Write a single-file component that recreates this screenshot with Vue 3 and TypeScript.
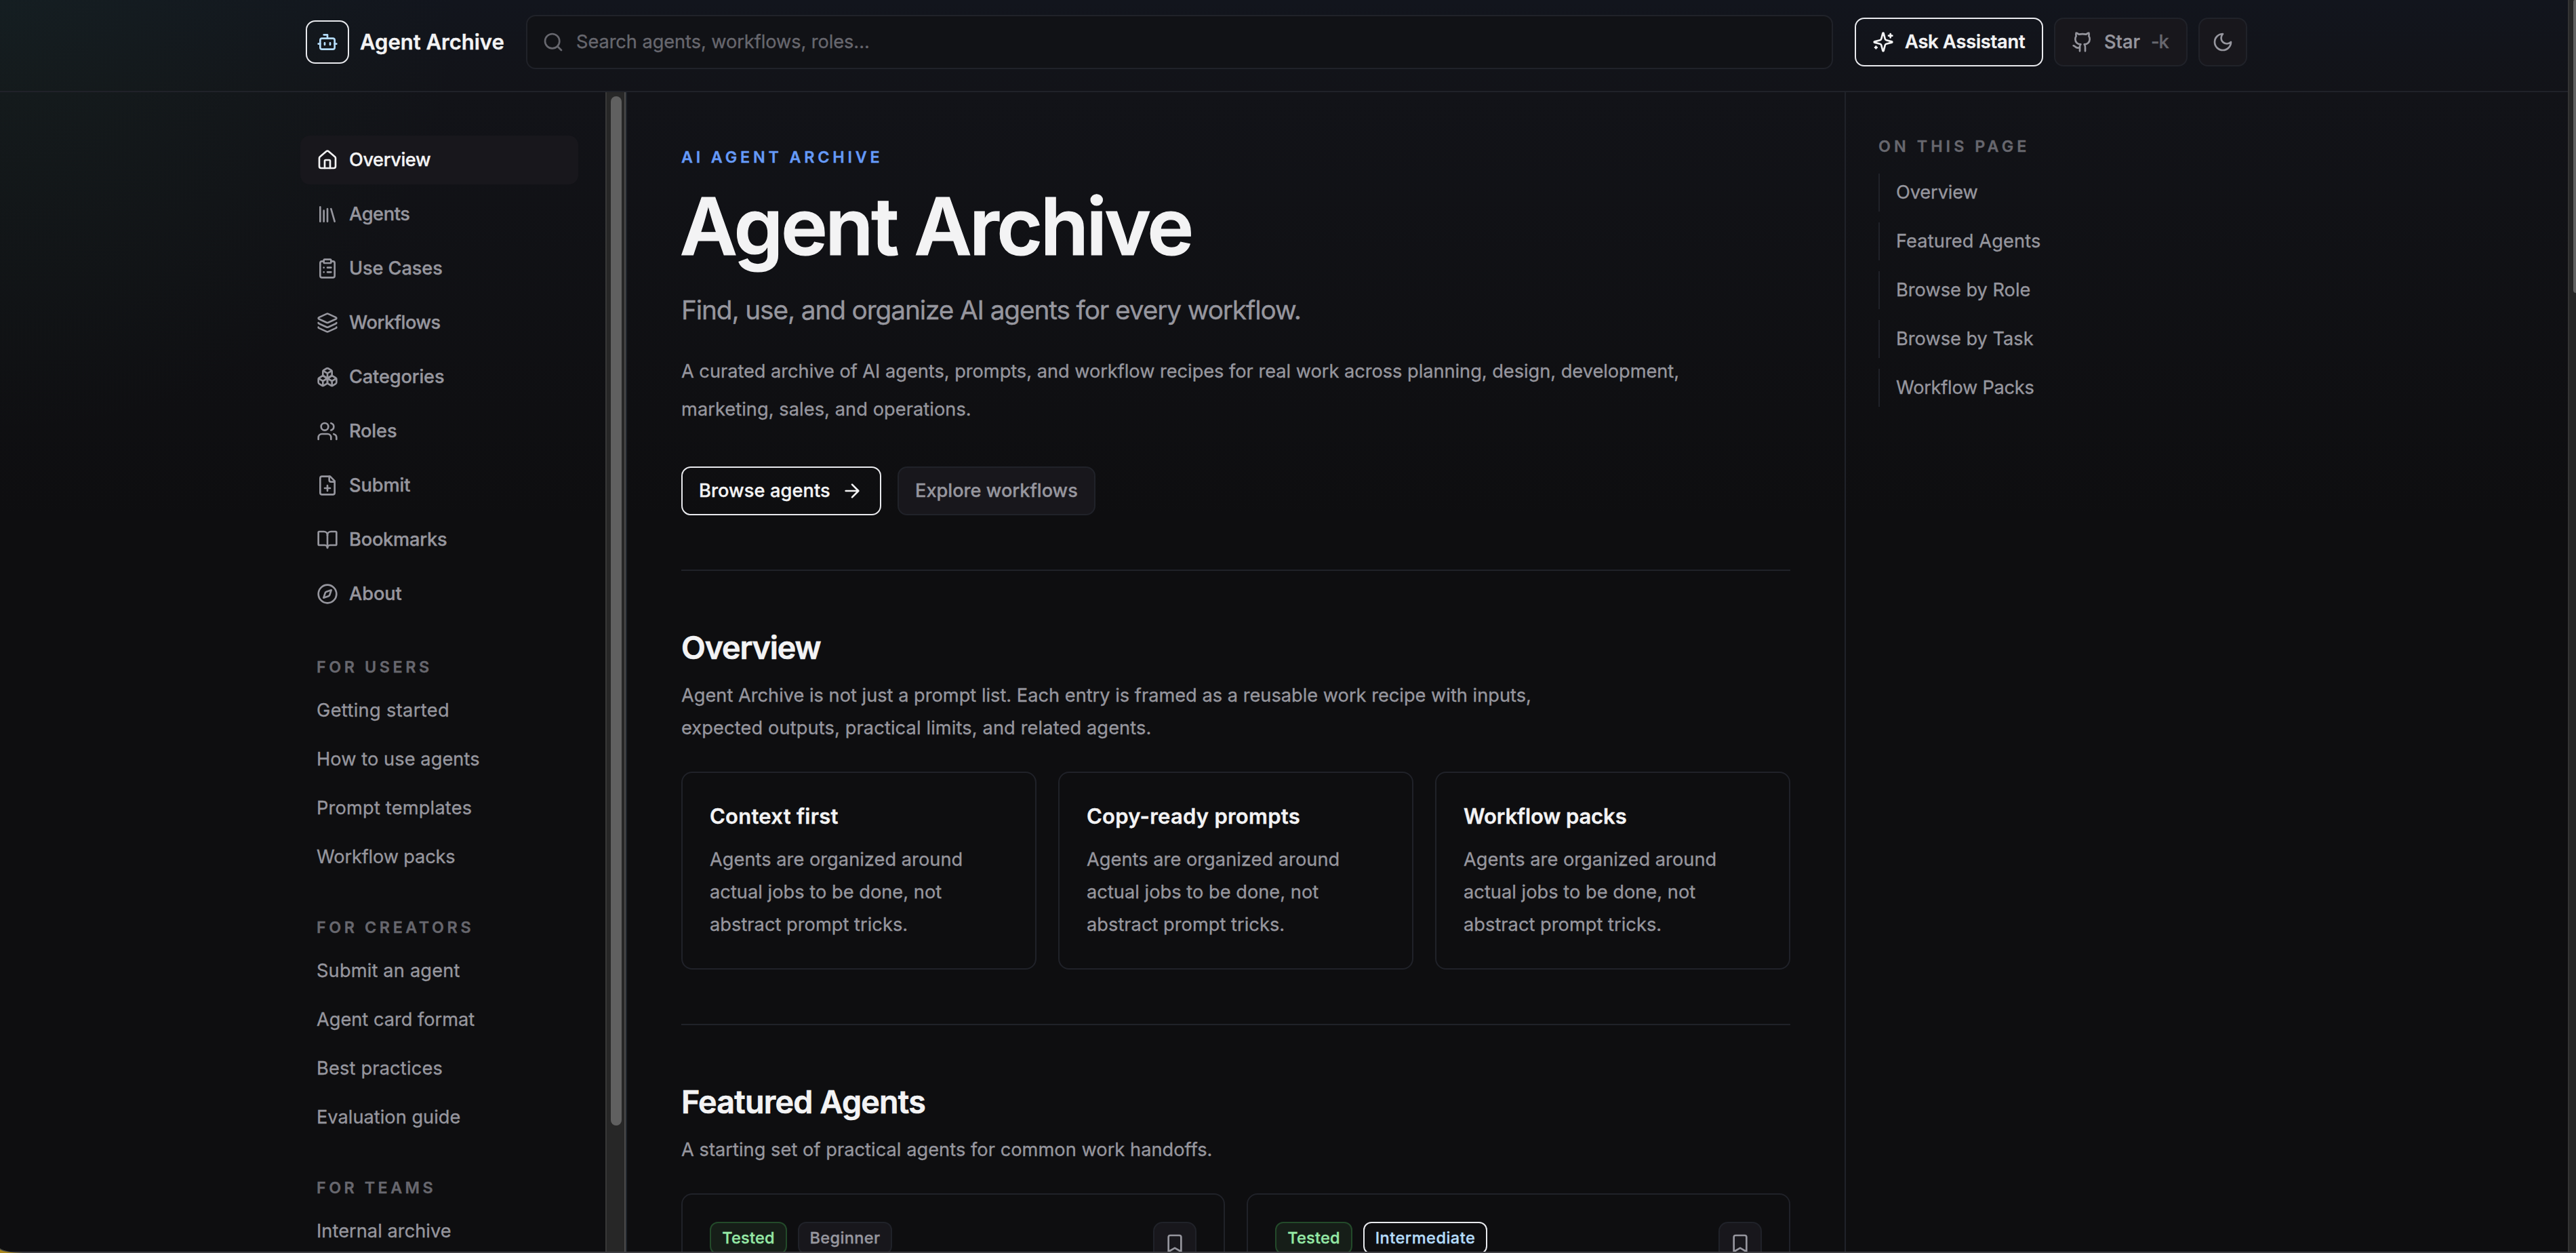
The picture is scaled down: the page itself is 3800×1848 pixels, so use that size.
<script setup lang="ts">
type Item = { label: string; track: number; icon?: string }
type Group = { title: string; track: number; links: Item[] }

// 24x24 stroke icons
const icons: Record<string, string> = {
  bot: '<path d="M12 8V4H8"/><rect width="16" height="12" x="4" y="8" rx="2"/><path d="M2 14h2M20 14h2M15 13v2M9 13v2"/>',
  search: '<circle cx="11" cy="11" r="8"/><path d="m21 21-4.3-4.3"/>',
  sparkles: '<path d="M9.937 15.5A2 2 0 0 0 8.5 14.063l-6.135-1.582a.5.5 0 0 1 0-.962L8.5 9.936A2 2 0 0 0 9.937 8.5l1.582-6.135a.5.5 0 0 1 .963 0L14.063 8.5A2 2 0 0 0 15.5 9.937l6.135 1.581a.5.5 0 0 1 0 .964L15.5 14.063a2 2 0 0 0-1.437 1.437l-1.582 6.135a.5.5 0 0 1-.963 0z"/><path d="M20 3v4M22 5h-4M4 17v2M5 18H3"/>',
  github: '<path d="M15 22v-4a4.8 4.8 0 0 0-1-3.5c3 0 6-2 6-5.5.08-1.25-.27-2.48-1-3.5.28-1.15.28-2.35 0-3.5 0 0-1 0-3 1.5-2.64-.5-5.36-.5-8 0C6 2 5 2 5 2c-.3 1.15-.3 2.35 0 3.5A5.403 5.403 0 0 0 4 9c0 3.5 3 5.5 6 5.5-.39.49-.68 1.05-.85 1.65-.17.6-.22 1.23-.15 1.85v4"/><path d="M9 18c-4.51 2-5-2-7-2"/>',
  moon: '<path d="M12 3a6 6 0 0 0 9 9 9 9 0 1 1-9-9Z"/>',
  house: '<path d="M15 21v-8a1 1 0 0 0-1-1h-4a1 1 0 0 0-1 1v8"/><path d="M3 10a2 2 0 0 1 .709-1.528l7-5.999a2 2 0 0 1 2.582 0l7 5.999A2 2 0 0 1 21 10v9a2 2 0 0 1-2 2H5a2 2 0 0 1-2-2z"/>',
  library: '<path d="m16 6 4 14M12 6v14M8 8v12M4 4v16"/>',
  clipboard: '<rect width="8" height="4" x="8" y="2" rx="1"/><path d="M16 4h2a2 2 0 0 1 2 2v14a2 2 0 0 1-2 2H6a2 2 0 0 1-2-2V6a2 2 0 0 1 2-2h2M12 11h4M12 16h4M8 11h.01M8 16h.01"/>',
  layers: '<path d="M12.83 2.18a2 2 0 0 0-1.66 0L2.6 6.08a1 1 0 0 0 0 1.83l8.58 3.91a2 2 0 0 0 1.66 0l8.58-3.9a1 1 0 0 0 0-1.83z"/><path d="M2 12a1 1 0 0 0 .58.91l8.6 3.91a2 2 0 0 0 1.65 0l8.58-3.9A1 1 0 0 0 22 12"/><path d="M2 17a1 1 0 0 0 .58.91l8.6 3.91a2 2 0 0 0 1.65 0l8.58-3.9A1 1 0 0 0 22 17"/>',
  boxes: '<path d="M2.97 12.92A2 2 0 0 0 2 14.63v3.24a2 2 0 0 0 .97 1.71l3 1.8a2 2 0 0 0 2.06 0L12 19v-5.5l-5-3-4.03 2.42Z"/><path d="m7 16.5-4.74-2.85M7 16.5l5-3M7 16.5v5.17"/><path d="M12 13.5V19l3.97 2.38a2 2 0 0 0 2.06 0l3-1.8a2 2 0 0 0 .97-1.71v-3.24a2 2 0 0 0-.97-1.71L17 10.5l-5 3Z"/><path d="m17 16.5-5-3M17 16.5l4.74-2.85M17 16.5v5.17"/><path d="M7.97 4.42A2 2 0 0 0 7 6.13v4.37l5 3 5-3V6.13a2 2 0 0 0-.97-1.71l-3-1.8a2 2 0 0 0-2.06 0l-3 1.8Z"/><path d="M12 8 7.26 5.15M12 8l4.74-2.85M12 13.5V8"/>',
  users: '<path d="M16 21v-2a4 4 0 0 0-4-4H6a4 4 0 0 0-4 4v2"/><circle cx="9" cy="7" r="4"/><path d="M22 21v-2a4 4 0 0 0-3-3.87M16 3.13a4 4 0 0 1 0 7.75"/>',
  file: '<path d="M15 2H6a2 2 0 0 0-2 2v16a2 2 0 0 0 2 2h12a2 2 0 0 0 2-2V7Z"/><path d="M14 2v4a2 2 0 0 0 2 2h4M9 15h6M12 18v-6"/>',
  book: '<path d="M12 7v14"/><path d="M3 18a1 1 0 0 1-1-1V4a1 1 0 0 1 1-1h5a4 4 0 0 1 4 4 4 4 0 0 1 4-4h5a1 1 0 0 1 1 1v13a1 1 0 0 1-1 1h-6a3 3 0 0 0-3 3 3 3 0 0 0-3-3z"/>',
  compass: '<path d="m16.24 7.76-1.804 5.411a2 2 0 0 1-1.265 1.265L7.76 16.24l1.804-5.411a2 2 0 0 1 1.265-1.265z"/><circle cx="12" cy="12" r="10"/>',
  arrow: '<path d="M5 12h14M12 5l7 7-7 7"/>',
  bookmark: '<path d="m19 21-7-4-7 4V5a2 2 0 0 1 2-2h10a2 2 0 0 1 2 2v16z"/>',
}

const nav: Item[] = [
  { label: 'Overview', icon: 'house', track: -0.42 },
  { label: 'Agents', icon: 'library', track: -0.4 },
  { label: 'Use Cases', icon: 'clipboard', track: -0.1 },
  { label: 'Workflows', icon: 'layers', track: -0.45 },
  { label: 'Categories', icon: 'boxes', track: -0.15 },
  { label: 'Roles', icon: 'users', track: -0.15 },
  { label: 'Submit', icon: 'file', track: -0.1 },
  { label: 'Bookmarks', icon: 'book', track: -0.2 },
  { label: 'About', icon: 'compass', track: -0.1 },
]

const groups: Group[] = [
  {
    title: 'For users',
    track: 4.6,
    links: [
      { label: 'Getting started', track: 0.35 },
      { label: 'How to use agents', track: 0.08 },
      { label: 'Prompt templates', track: 0.2 },
      { label: 'Workflow packs', track: -0.15 },
    ],
  },
  {
    title: 'For creators',
    track: 4.6,
    links: [
      { label: 'Submit an agent', track: 0.18 },
      { label: 'Agent card format', track: 0 },
      { label: 'Best practices', track: 0.18 },
      { label: 'Evaluation guide', track: 0.02 },
    ],
  },
  { title: 'For teams', track: 4.5, links: [{ label: 'Internal archive', track: 0.05 }] },
]

const toc: Item[] = [
  { label: 'Overview', track: -0.1 },
  { label: 'Featured Agents', track: 0.12 },
  { label: 'Browse by Role', track: 0 },
  { label: 'Browse by Task', track: 0 },
  { label: 'Workflow Packs', track: -0.25 },
]

const principles: Item[] = [
  { label: 'Context first', track: 0.25 },
  { label: 'Copy-ready prompts', track: 0.25 },
  { label: 'Workflow packs', track: -0.1 },
]
const agents: { level: string; tone: string }[] = [
  { level: 'Beginner', tone: 'muted' },
  { level: 'Intermediate', tone: 'outline' },
]
const px = (n: number) => ({ letterSpacing: n + 'px' })
</script>

<template>
  <div class="page">
    <div class="app">
      <header class="topbar">
        <div class="brand">
          <span class="logo"><svg class="icon logo-icon" viewBox="0 0 24 24" v-html="icons.bot" /></span>
          <span class="brand-name">Agent Archive</span>
        </div>
        <div class="search">
          <svg class="icon" viewBox="0 0 24 24" v-html="icons.search" />
          <span>Search agents, workflows, roles...</span>
        </div>
        <div class="actions">
          <button class="btn primary ask"><svg class="icon" viewBox="0 0 24 24" v-html="icons.sparkles" />Ask Assistant</button>
          <button class="btn star"><svg class="icon" viewBox="0 0 24 24" v-html="icons.github" />Star<span class="count">-k</span></button>
          <button class="btn square"><svg class="icon" viewBox="0 0 24 24" v-html="icons.moon" /></button>
        </div>
      </header>

      <div class="columns">
        <aside class="sidebar">
          <div class="sidebar-body">
            <nav class="nav">
              <a v-for="(n, i) in nav" :key="n.label" class="nav-item" :class="{ active: i === 0 }">
                <svg class="icon" viewBox="0 0 24 24" v-html="icons[n.icon!]" />
                <span :style="px(n.track)">{{ n.label }}</span>
              </a>
            </nav>
            <section v-for="g in groups" :key="g.title" class="group">
              <h4 class="label" :style="px(g.track)">{{ g.title }}</h4>
              <a v-for="l in g.links" :key="l.label" class="link" :style="px(l.track)">{{ l.label }}</a>
            </section>
          </div>
          <div class="scroll"><div class="scroll-thumb" /></div>
        </aside>

        <main class="main">
          <section class="hero">
            <p class="eyebrow">AI Agent Archive</p>
            <h1>Agent Archive</h1>
            <p class="tagline">Find, use, and organize AI agents for every workflow.</p>
            <p class="lead">
              <span class="tight">A curated archive of AI agents, prompts, and workflow recipes for real work across planning, design, development,</span><br />marketing, sales, and operations.
            </p>
            <div class="hero-actions">
              <button class="btn primary browse">Browse agents<svg class="icon" viewBox="0 0 24 24" v-html="icons.arrow" /></button>
              <button class="btn explore">Explore workflows</button>
            </div>
          </section>

          <section class="block">
            <h2 class="h-overview">Overview</h2>
            <p class="intro">
              <span class="tight">Agent Archive is not just a prompt list. Each entry is framed as a reusable work recipe with inputs,</span><br />expected outputs, practical limits, and related agents.
            </p>
            <div class="cards three">
              <article v-for="p in principles" :key="p.label" class="card">
                <h3 :style="px(p.track)">{{ p.label }}</h3>
                <p>Agents are organized around<br />actual jobs to be done, not<br />abstract prompt tricks.</p>
              </article>
            </div>
          </section>

          <section class="block featured">
            <h2 class="h-featured">Featured Agents</h2>
            <p class="intro single">A starting set of practical agents for common work handoffs.</p>
            <div class="cards two">
              <article v-for="a in agents" :key="a.level" class="card agent">
                <span class="badge tested">Tested</span>
                <span class="badge" :class="a.tone">{{ a.level }}</span>
                <button class="save"><svg class="icon" viewBox="0 0 24 24" v-html="icons.bookmark" /></button>
              </article>
            </div>
          </section>
        </main>

        <aside class="toc">
          <h4 class="label toc-label">On this page</h4>
          <a v-for="t in toc" :key="t.label" class="toc-link" :style="px(t.track)">{{ t.label }}</a>
        </aside>
      </div>
    </div>

    <div class="page-scroll"><div class="page-thumb" /></div>
    <div class="window-edge" />
    <svg class="corner" viewBox="0 0 40 8"><path d="M0 1Q8 7 38 8H0Z" fill="#4a4a42" /><path d="M0 3Q6 7.400 34 8H0Z" fill="#a8861c" /></svg>
  </div>
</template>

<style>
body { margin: 0; background: #0e0e10; overflow: hidden; }
</style>

<style scoped>
* { box-sizing: border-box; }
h1, h2, h3, h4, p { margin: 0; }
.page {
  position: relative;
  display: flex;
  width: 3800px;
  height: 1848px;
  overflow: hidden;
  color: #96969e;
  font: 400 27.2px/48px Inter, "Liberation Sans", sans-serif;
  -webkit-text-stroke: 0.35px currentColor;
  background:
    radial-gradient(ellipse 680px 640px at 0 0, rgba(44, 104, 72, 0.11), rgba(44, 104, 72, 0)),
    linear-gradient(180deg, #12151d 0, #121318 140px, #0e0e10 760px);
}
.app { flex: 1; display: flex; flex-direction: column; min-width: 0; }
.icon {
  width: 32px;
  height: 32px;
  flex: none;
  fill: none;
  stroke: currentColor;
  stroke-width: 2;
  stroke-linecap: round;
  stroke-linejoin: round;
}

.topbar {
  display: flex;
  align-items: flex-start;
  gap: 32px;
  height: 136px;
  padding: 22px 473px 0 451px;
  border-bottom: 2px solid #202229;
}
.brand { display: flex; align-items: center; gap: 16px; width: 293px; height: 80px; }
.logo {
  display: grid;
  place-items: center;
  width: 64px;
  height: 64px;
  border: 2px solid #e8e9ed;
  border-radius: 14px;
  color: #b5dcfa;
}
.brand-name { color: #f3f3f4; font-size: 31px; font-weight: 600; white-space: nowrap; }
.search {
  flex: 1;
  display: flex;
  align-items: center;
  gap: 18px;
  height: 80px;
  padding: 0 24px 0 22px;
  border: 2px solid #202229;
  border-radius: 14px;
  background: #111216;
  color: #67676e;
  letter-spacing: -0.06px;
}
.actions { display: flex; gap: 16px; padding-top: 4px; }
.btn {
  display: flex;
  align-items: center;
  gap: 16px;
  height: 72px;
  margin: 0;
  padding: 0 24px;
  border: 2px solid #202229;
  border-radius: 14px;
  background: #18171c;
  color: #96969e;
  font: 500 27.2px/48px Inter, "Liberation Sans", sans-serif;
  white-space: nowrap;
}
.btn.primary { border-color: #e8e9ed; background: transparent; color: #f3f3f4; }
.btn.ask { width: 278px; font-weight: 600; letter-spacing: -0.2px; }
.btn.star { width: 197px; }
.btn.square { width: 72px; padding: 0 18px; }
.count { color: #67676e; letter-spacing: -1px; }

.columns { flex: 1; display: flex; min-height: 0; }
.sidebar { display: flex; width: 925px; border-right: 2px solid #20252c; }
.sidebar-body { flex: 1; padding: 64px 40px 0 443px; overflow: hidden; }
.nav { display: flex; flex-direction: column; gap: 8px; }
.nav-item {
  display: flex;
  align-items: center;
  gap: 16px;
  height: 72px;
  padding: 0 24px;
  border-radius: 14px;
  font-weight: 500;
}
.nav-item.active { background: #18171c; color: #f3f3f4; }
.group { display: flex; flex-direction: column; gap: 16px; padding: 54px 0 4px 24px; }
.label {
  color: #67676e;
  font-size: 23.3px;
  font-weight: 600;
  line-height: 36px;
  text-transform: uppercase;
  white-space: nowrap;
}
.group .label { margin-bottom: 2px; }
.link { height: 56px; line-height: 56px; white-space: nowrap; }
.scroll {
  width: 30px;
  padding: 6px 6px 0;
  border-left: 2px solid #383838;
  border-right: 2px solid #4b4b4b;
  background: #272727;
}
.scroll-thumb { width: 16px; height: 1518px; border-radius: 8px; background: #606060; }

.main { width: 1796px; padding: 0 80px; overflow: hidden; }
.hero { height: 704px; padding-top: 78px; }
.eyebrow {
  color: #659af8;
  font-size: 23.3px;
  font-weight: 600;
  line-height: 36px;
  letter-spacing: 4.85px;
  text-transform: uppercase;
}
h1 {
  margin-top: 26px;
  color: #f3f3f4;
  font-size: 116.4px;
  font-weight: 600;
  line-height: 116px;
  letter-spacing: -3.4px;
  text-indent: -2px;
  -webkit-text-stroke-width: 1.2px;
}
.tagline { margin-top: 36px; font-size: 38.8px; line-height: 58px; letter-spacing: -1.13px; white-space: nowrap; }
.lead { margin-top: 34px; line-height: 56px; letter-spacing: 0.07px; white-space: nowrap; }
.lead .tight { letter-spacing: -0.02px; }
.hero-actions { display: flex; gap: 24px; margin-top: 56px; }
.btn.browse { width: 295px; letter-spacing: 0.1px; }
.btn.explore { width: 292px; letter-spacing: 0; }

.block { height: 670px; padding-top: 84px; border-top: 2px solid #202229; }
h2 { color: #f3f3f4; font-size: 46.6px; font-weight: 600; line-height: 58px; -webkit-text-stroke-width: 0.7px; }
.h-overview { letter-spacing: -1.15px; }
.h-featured { letter-spacing: -0.77px; }
.intro { margin-top: 18px; letter-spacing: 0.13px; white-space: nowrap; }
.intro .tight { letter-spacing: 0.01px; }
.intro.single { letter-spacing: 0.05px; }
.cards { display: grid; gap: 32px; margin-top: 40px; }
.three { grid-template-columns: repeat(3, 1fr); }
.two { grid-template-columns: repeat(2, 1fr); }
.card { padding: 40px; border: 2px solid #202229; border-radius: 16px; }
h3 { margin-bottom: 16px; color: #f3f3f4; font-size: 31px; font-weight: 600; line-height: 48px; }
.card p { letter-spacing: 0.04px; }
.agent { display: flex; align-items: flex-start; gap: 16px; height: 420px; }
.badge {
  width: 139px;
  height: 48px;
  border: 2px solid #202229;
  border-radius: 12px;
  background: #18171c;
  font-size: 23.5px;
  font-weight: 500;
  line-height: 44px;
  letter-spacing: 0.4px;
  text-align: center;
}
.badge.tested { width: 114px; border-color: #234a2a; background: #161e18; color: #95e8a5; letter-spacing: 0.2px; }
.badge.outline { width: 183px; border-color: #e8e9ed; background: transparent; color: #b5dcfa; letter-spacing: 0.5px; }
.save {
  display: grid;
  place-items: center;
  width: 64px;
  height: 64px;
  margin: 0 0 0 auto;
  padding: 0;
  border: 2px solid #202229;
  border-radius: 14px;
  background: #18171c;
  color: #96969e;
}

.toc {
  flex: 1;
  display: flex;
  flex-direction: column;
  align-items: flex-start;
  gap: 16px;
  padding: 62px 0 0 48px;
  border-left: 2px solid #202229;
}
.toc-label { margin-bottom: 6px; letter-spacing: 5.08px; }
.toc-link { height: 56px; padding-left: 24px; border-left: 2px solid #202229; line-height: 56px; }

.page-scroll { width: 12px; padding-left: 6px; border-left: 2px solid #343434; background: #272727; }
.page-thumb { height: 432px; border-radius: 4px 0 0 8px; background: #616161; }
.window-edge { position: absolute; left: 0; right: 0; bottom: 0; height: 2px; background: #403f43; }
.corner { position: absolute; left: 0; bottom: 0; width: 40px; height: 8px; }
</style>
